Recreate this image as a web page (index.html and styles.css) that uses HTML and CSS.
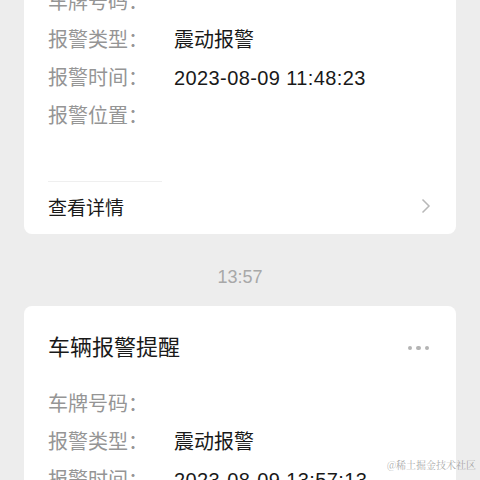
FILE: index.html
```html
<!DOCTYPE html>
<html lang="zh-CN">
<head>
<meta charset="UTF-8">
<meta name="viewport" content="width=device-width, initial-scale=1.0">
<title>车辆报警提醒</title>
<link rel="stylesheet" href="styles.css">
</head>
<body>
<div class="chat">
    <div class="card">
        <div class="card-title">
            <span>车辆报警提醒</span>
            <span class="more"><i></i><i></i><i></i></span>
        </div>
        <div class="rows">
            <div class="row"><span class="label">车牌号码：</span><span class="value"></span></div>
            <div class="row"><span class="label">报警类型：</span><span class="value">震动报警</span></div>
            <div class="row"><span class="label">报警时间：</span><span class="value num">2023-08-09 11:48:23</span></div>
            <div class="row"><span class="label">报警位置：</span><span class="value"></span></div>
        </div>
        <div class="divider"></div>
        <div class="footer">
            <span>查看详情</span>
            <svg class="chevron" width="10" height="16" viewBox="0 0 10 16"><path d="M1.5 1.5 L8 8 L1.5 14.5" fill="none" stroke="#b8b8b8" stroke-width="1.5"/></svg>
        </div>
    </div>

    <div class="time">13:57</div>

    <div class="card">
        <div class="card-title">
            <span>车辆报警提醒</span>
            <span class="more"><i></i><i></i><i></i></span>
        </div>
        <div class="rows">
            <div class="row"><span class="label">车牌号码：</span><span class="value"></span></div>
            <div class="row"><span class="label">报警类型：</span><span class="value">震动报警</span></div>
            <div class="row"><span class="label">报警时间：</span><span class="value num">2023-08-09 13:57:13</span></div>
            <div class="row"><span class="label">报警位置：</span><span class="value"></span></div>
        </div>
    </div>
</div>
<div class="watermark">@稀土掘金技术社区</div>
</body>
</html>
```

FILE: styles.css
```css
html, body {
    margin: 0;
    height: 100%;
    overflow: hidden;
}
body {
    background: #ededed;
    font-family: "Liberation Sans", "Noto Sans CJK SC", sans-serif;
    color: #191919;
}
.chat {
    margin-top: -96px;
    padding: 0 24px;
}
.card {
    background: #fff;
    border-radius: 8px;
    padding: 26px 24px 0;
}
.card-title {
    display: flex;
    justify-content: space-between;
    align-items: center;
    font-size: 22px;
    line-height: 32px;
}
.more {
    display: flex;
    gap: 4px;
    margin-right: 3px;
}
.more i {
    width: 4.5px;
    height: 4.5px;
    border-radius: 50%;
    background: #b4b4b4;
}
.rows {
    margin-top: 21px;
    padding-bottom: 46px;
}
.row {
    display: flex;
    font-size: 20px;
    line-height: 38px;
}
.label {
    width: 126px;
    color: #959595;
}
.num {
    letter-spacing: 0.4px;
}
.divider {
    width: 114px;
    height: 1px;
    background: #efefef;
}
.footer {
    display: flex;
    justify-content: space-between;
    align-items: center;
    box-sizing: border-box;
    height: 52px;
    padding-bottom: 4px;
    font-size: 19px;
}
.chevron {
    margin-right: 1px;
}
.time {
    margin: 32px 0 18px;
    text-align: center;
    font-size: 18px;
    line-height: 22px;
    color: #a8a8a8;
}
.watermark {
    position: absolute;
    right: 4px;
    bottom: 8px;
    font-family: "Noto Serif CJK SC", "Noto Sans CJK SC", serif;
    font-size: 10px;
    color: rgba(140, 140, 140, 0.75);
}
```
